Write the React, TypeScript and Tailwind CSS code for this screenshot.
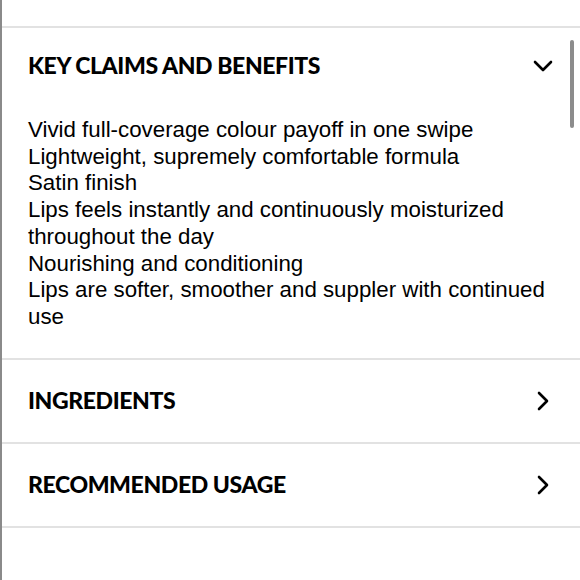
import React from "react";

const Down = () => (
  <svg width="20" height="12" viewBox="0 0 20 12" fill="none" stroke="#000" strokeWidth="2.6" strokeLinecap="round" strokeLinejoin="round">
    <path d="M2 2 L10 10 L18 2" />
  </svg>
);
const Right = () => (
  <svg width="12" height="20" viewBox="0 0 12 20" fill="none" stroke="#000" strokeWidth="2.6" strokeLinecap="round" strokeLinejoin="round">
    <path d="M2 2 L10 10 L2 18" />
  </svg>
);

const head = "font-['Lato',sans-serif] font-black text-[23px] tracking-[-0.4px] text-black";

export default function App() {
  const lines = [
    "Vivid full-coverage colour payoff in one swipe",
    "Lightweight, supremely comfortable formula",
    "Satin finish",
    "Lips feels instantly and continuously moisturized throughout the day",
    "Nourishing and conditioning",
    "Lips are softer, smoother and suppler with continued use",
  ];
  return (
    <div className="relative w-[580px] h-[580px] bg-white border-l-2 border-[#8a8a8a] overflow-hidden">
      <div className="h-[26px]" />
      <div className="border-t-2 border-[#e2e2e2]">
        <div className="flex items-center justify-between h-[75px] pl-[26px] pr-[27px]">
          <span className={head}>KEY CLAIMS AND BENEFITS</span>
          <Down />
        </div>
        <div className="pl-[26px] pr-[22px] pt-[14px] pb-[27px] font-['Liberation_Sans',Arial,sans-serif] text-[22.3px] leading-[26.7px] text-black">
          {lines.map((l) => (
            <div key={l}>{l}</div>
          ))}
        </div>
      </div>
      {["INGREDIENTS", "RECOMMENDED USAGE"].map((t) => (
        <div key={t} className="border-t-2 border-[#e2e2e2] flex items-center justify-between h-[84px] pl-[26px] pr-[31px]">
          <span className={head}>{t}</span>
          <Right />
        </div>
      ))}
      <div className="border-t-2 border-[#e2e2e2]" />
      <div className="absolute right-[6px] top-[40px] w-[4px] h-[88px] rounded-full bg-[#8c8c8c]" />
    </div>
  );
}
